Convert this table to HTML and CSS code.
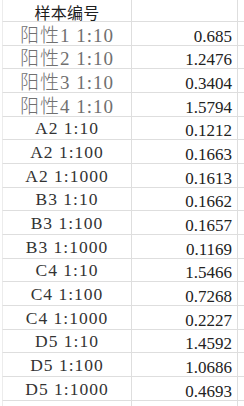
FILE: index.html
```html
<!DOCTYPE html>
<html>
<head>
<meta charset="utf-8">
<link rel="stylesheet" href="styles.css">
</head>
<body>
<div class="sheet">
  <div class="c1 head">样本编号</div><div class="c2"></div><div class="c3"></div>
  <div class="c1 pos">阳性1 1:10</div><div class="c2">0.685</div><div class="c3"></div>
  <div class="c1 pos">阳性2 1:10</div><div class="c2">1.2476</div><div class="c3"></div>
  <div class="c1 pos">阳性3 1:10</div><div class="c2">0.3404</div><div class="c3"></div>
  <div class="c1 pos">阳性4 1:10</div><div class="c2">1.5794</div><div class="c3"></div>
  <div class="c1">A2 1:10</div><div class="c2">0.1212</div><div class="c3"></div>
  <div class="c1">A2 1:100</div><div class="c2">0.1663</div><div class="c3"></div>
  <div class="c1">A2 1:1000</div><div class="c2">0.1613</div><div class="c3"></div>
  <div class="c1">B3 1:10</div><div class="c2">0.1662</div><div class="c3"></div>
  <div class="c1">B3 1:100</div><div class="c2">0.1657</div><div class="c3"></div>
  <div class="c1">B3 1:1000</div><div class="c2">0.1169</div><div class="c3"></div>
  <div class="c1">C4 1:10</div><div class="c2">1.5466</div><div class="c3"></div>
  <div class="c1">C4 1:100</div><div class="c2">0.7268</div><div class="c3"></div>
  <div class="c1">C4 1:1000</div><div class="c2">0.2227</div><div class="c3"></div>
  <div class="c1">D5 1:10</div><div class="c2">1.4592</div><div class="c3"></div>
  <div class="c1">D5 1:100</div><div class="c2">1.0686</div><div class="c3"></div>
  <div class="c1">D5 1:1000</div><div class="c2">0.4693</div><div class="c3"></div>
  <div class="c1 tail"></div><div class="c2 tail"></div><div class="c3 tail"></div>
</div>
</body>
</html>
```
FILE: styles.css
```css
html, body {
  margin: 0;
  padding: 0;
  background: #ffffff;
}
body {
  width: 244px;
  height: 406px;
  overflow: hidden;
}
.sheet {
  display: grid;
  grid-template-columns: 130px 106px 1fr;
  grid-template-rows: 22px repeat(16, 23.667px) 10px;
  padding-left: 2px;
}
.c1, .c2, .c3 {
  box-sizing: border-box;
  border-bottom: 1px solid #dedede;
  border-right: 1px solid #dedede;
  display: flex;
  align-items: flex-end;
  overflow: visible;
  white-space: nowrap;
}
.c1 {
  border-left: 1px solid #ececec;
  justify-content: center;
  font-family: "Liberation Serif", "Noto Sans CJK SC", serif;
  font-size: 17.5px;
  line-height: 17px;
  letter-spacing: 1px;
  color: #333333;
  padding-bottom: 2px;
}
.c1.pos {
  font-size: 19px;
  font-weight: 300;
  color: #707070;
  padding-bottom: 1px;
}
.c1.head {
  font-family: "Noto Sans CJK SC", sans-serif;
  font-size: 16px;
  letter-spacing: 0.3px;
  color: #1e1e1e;
  line-height: 16px;
  padding-bottom: 1px;
}
.c2 {
  justify-content: flex-end;
  padding-right: 5px;
  font-family: "Liberation Serif", serif;
  font-size: 17px;
  line-height: 16px;
  color: #222222;
}
.c3 {
  border-right: none;
}
.tail {
  border-bottom: none;
}
```
